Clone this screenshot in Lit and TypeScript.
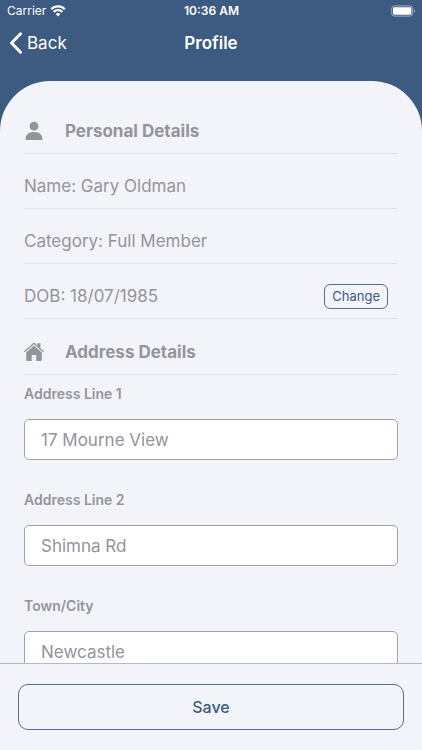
import { LitElement, html, css, svg } from "lit";
import { customElement, state } from "lit/decorators.js";

const personIcon = svg`<svg class="icon" viewBox="0 0 20 20" aria-hidden="true">
  <circle cx="10" cy="5.2" r="4.4"/>
  <path d="M1.6 18.9v-1.3c0-4 3.2-6.6 8.4-6.6s8.4 2.6 8.4 6.6v1.3z"/>
</svg>`;

const homeIcon = svg`<svg class="icon" viewBox="0 0 20 20" aria-hidden="true">
  <path d="M10 3.5 17.8 10.4V17.7q0 1.3-1.3 1.3h-4.2v-6H7.7v6H3.5q-1.3 0-1.3-1.3V10.4z"/>
  <path d="M13.4 1.2h3v5.4l-3-2.6z"/>
  <path d="M.8 9.4 10 1.3 19.2 9.4" fill="none" stroke="currentColor" stroke-width="1.3" stroke-linecap="round" stroke-linejoin="round"/>
</svg>`;

@customElement("app-root")
export class AppRoot extends LitElement {
  @state() private details = [
    { label: "Name", value: "Gary Oldman", editable: false },
    { label: "Category", value: "Full Member", editable: false },
    { label: "DOB", value: "18/07/1985", editable: true },
  ];

  @state() private address = [
    { id: "line1", label: "Address Line 1", value: "17 Mourne View" },
    { id: "line2", label: "Address Line 2", value: "Shimna Rd" },
    { id: "town", label: "Town/City", value: "Newcastle" },
  ];

  static styles = css`
    :host {
      --blue: #3d5a80;
      --edge: #536d8f;
      --paper: #f3f4f9;
      --grey: #93949c;
      display: flex;
      flex-direction: column;
      height: 100vh;
      background: var(--blue);
      color: var(--grey);
      font-family: Inter, "Liberation Sans", sans-serif;
      font-size: 17px;
      font-weight: 400;
    }
    * {
      box-sizing: border-box;
    }
    button,
    input {
      font: inherit;
      color: inherit;
    }
    .status,
    .nav {
      display: grid;
      grid-template-columns: 1fr auto 1fr;
      align-items: center;
      color: #fff;
    }
    .status {
      height: 21px;
      padding: 0 6px 0 7px;
      font-size: 12px;
    }
    .carrier {
      display: flex;
      align-items: center;
      gap: 4px;
    }
    .wifi {
      width: 16px;
      height: 12px;
      fill: none;
      stroke: #fff;
    }
    .clock {
      font-weight: 600;
    }
    .battery {
      justify-self: end;
      width: 25px;
      height: 12px;
    }
    .nav {
      height: 60px;
      padding: 0 9px 16px;
    }
    .back {
      display: flex;
      align-items: center;
      justify-self: start;
      gap: 4px;
      padding: 0;
      border: 0;
      background: none;
    }
    .chevron {
      width: 14px;
      height: 22px;
      fill: none;
      stroke: #fff;
      stroke-width: 3;
      stroke-linecap: round;
      stroke-linejoin: round;
    }
    h1,
    h2 {
      margin: 0;
      font-size: 17px;
      font-weight: 600;
    }
    h2 {
      font-weight: 700;
    }
    .sheet {
      flex: 1;
      min-height: 0;
      overflow: hidden;
      padding: 17px 24px 0;
      border-radius: 50px 50px 0 0;
      background: var(--paper);
    }
    .row {
      display: flex;
      align-items: center;
      justify-content: space-between;
      height: 55px;
      padding: 10px 10px 0 0;
      border-bottom: 1px solid #e2e3e8;
    }
    .heading {
      justify-content: flex-start;
      gap: 21px;
      height: 56px;
    }
    .icon {
      width: 20px;
      height: 20px;
      fill: currentColor;
    }
    .change {
      height: 25px;
      padding: 0 7px;
      border: 1px solid var(--edge);
      border-radius: 6px;
      background: none;
      color: var(--blue);
      font-size: 13px;
    }
    .fields {
      display: grid;
      gap: 30px;
      padding: 9px 0 30px;
    }
    .field {
      display: grid;
      gap: 15px;
    }
    label {
      font-size: 14px;
      font-weight: 600;
      line-height: 20px;
    }
    input {
      width: 100%;
      height: 41px;
      padding: 0 16px;
      border: 1px solid #a0a1a9;
      border-radius: 5px;
      background: #fff;
    }
    .footer {
      padding: 20px 18px;
      border-top: 1px solid #b4b9c9;
      background: var(--paper);
    }
    .save {
      display: block;
      width: 100%;
      height: 46px;
      border: 1px solid var(--edge);
      border-radius: 10px;
      background: none;
      color: var(--blue);
      font-size: 16px;
      font-weight: 500;
    }
  `;

  render() {
    return html`
      <div class="status">
        <span class="carrier">Carrier
          <svg class="wifi" viewBox="0 0 16 12" aria-hidden="true">
            <path d="M1.2 4.2a9.7 9.7 0 0 1 13.6 0M3.7 6.8a6.2 6.2 0 0 1 8.6 0" stroke-width="2.3"/>
            <path d="M5.7 9.1a3.3 3.3 0 0 1 4.6 0L8 11.5z" fill="#fff" stroke="none"/>
          </svg>
        </span>
        <span class="clock">10:36 AM</span>
        <svg class="battery" viewBox="0 0 25 12" aria-hidden="true">
          <rect x=".7" y=".9" width="21" height="10.2" rx="2.8" fill="none" stroke="#fff" stroke-opacity=".5"/>
          <rect x="2" y="2.3" width="18.4" height="7.4" rx="1.4" fill="#fff"/>
          <path d="M23 4.2a2 2 0 0 1 0 3.6z" fill="#fff" fill-opacity=".5"/>
        </svg>
      </div>
      <header class="nav">
        <button class="back" type="button">
          <svg class="chevron" viewBox="0 0 14 22" aria-hidden="true"><path d="M11.5 1.8 2.6 11l8.9 9.2"/></svg>
          Back
        </button>
        <h1>Profile</h1>
      </header>
      <main class="sheet">
        <div class="row heading">${personIcon}<h2>Personal Details</h2></div>
        ${this.details.map(
          (d) => html`<div class="row">
            <span>${d.label}: ${d.value}</span>
            ${d.editable ? html`<button class="change" type="button">Change</button>` : null}
          </div>`
        )}
        <div class="row heading">${homeIcon}<h2>Address Details</h2></div>
        <div class="fields">
          ${this.address.map(
            (f) => html`<div class="field">
              <label for=${f.id}>${f.label}</label>
              <input id=${f.id} type="text" .value=${f.value} />
            </div>`
          )}
        </div>
      </main>
      <footer class="footer"><button class="save" type="button">Save</button></footer>
    `;
  }
}
